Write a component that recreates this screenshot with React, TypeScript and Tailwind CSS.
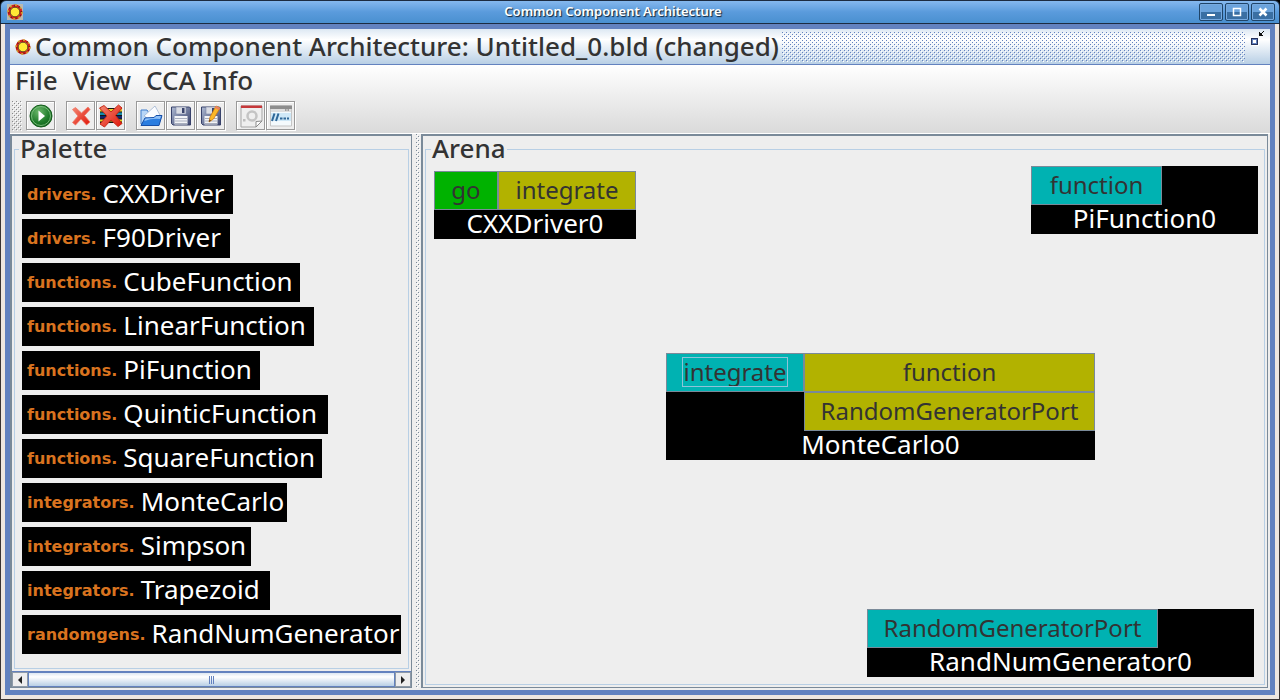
import { useId } from 'react';
import type { ReactNode } from 'react';

type Port = { name: string; kind: 'go' | 'provides' | 'uses'; focused?: boolean };

const portColors = {
  go: 'bg-[#00b200]',
  provides: 'bg-[#00b2b2]',
  uses: 'bg-[#b2b200]',
};

const palette = [
  ['drivers.', 'CXXDriver', 'w-[211px]'],
  ['drivers.', 'F90Driver', 'w-[208px]'],
  ['functions.', 'CubeFunction', 'w-[278px]'],
  ['functions.', 'LinearFunction', 'w-[292px]'],
  ['functions.', 'PiFunction', 'w-[238px]'],
  ['functions.', 'QuinticFunction', 'w-[306px]'],
  ['functions.', 'SquareFunction', 'w-[300px]'],
  ['integrators.', 'MonteCarlo', 'w-[265px]'],
  ['integrators.', 'Simpson', 'w-[229px]'],
  ['integrators.', 'Trapezoid', 'w-[248px]'],
  ['randomgens.', 'RandNumGenerator', 'w-[379px]'],
];

function SunIcon({ boxed = false }: { boxed?: boolean }) {
  return (
    <svg viewBox="0 0 16 16" className="size-4 shrink-0" aria-hidden="true">
      {boxed && <path d="M0 0h16v16H0z" fill="#b9b9b0" />}
      <circle cx="8" cy="8" r="6.2" fill="none" stroke="#d8201c" strokeWidth="2.4" />
      <circle cx="8" cy="8" r="6.9" fill="none" stroke="#c9a62a" strokeWidth="1.6" strokeDasharray="1.8 3.6" />
      <circle cx="8" cy="8" r="6.4" fill="none" stroke="#6b1a10" strokeWidth="1.6" strokeDasharray="1 4.03" strokeDashoffset="2" />
      <circle cx="8" cy="8" r="4.8" fill="#ffe835" stroke="#5a2a10" strokeWidth=".9" />
    </svg>
  );
}

// Diagonal drag texture of the Metal look and feel
function Bumps({ className, dark, light = '#fff' }: { className: string; dark: string; light?: string }) {
  const id = useId();
  return (
    <svg className={className} aria-hidden="true" shapeRendering="crispEdges">
      <defs>
        <pattern id={id} width="4" height="4" patternUnits="userSpaceOnUse">
          <path d="M0 0h1v1H0zM2 2h1v1H2z" fill={dark} />
          <path d="M1 1h1v1H1zM3 3h1v1H3z" fill={light} />
        </pattern>
      </defs>
      <rect width="100%" height="100%" fill={`url(#${id})`} />
    </svg>
  );
}

function WindowButton({ label, children }: { label: string; children: ReactNode }) {
  return (
    <button
      type="button"
      aria-label={label}
      className="flex h-[18px] w-6 items-center justify-center rounded-[2px] border border-[#1f4468] bg-linear-to-b from-[#6ba3dc] from-50% to-[#3a6fa3] to-50% inset-ring inset-ring-[#77aae0]"
    >
      <svg viewBox="0 0 10 10" className="size-[10px]" fill="none" stroke="#fff" strokeWidth="2" aria-hidden="true">
        {children}
      </svg>
    </button>
  );
}

function ToolButton({ label, children }: { label: string; children: ReactNode }) {
  return (
    <button
      type="button"
      aria-label={label}
      className="flex size-[29px] items-center justify-center border border-[#999] bg-[#eee] shadow-[1px_1px_0_#fff] inset-shadow-[1px_1px_0_#fff]"
    >
      <svg viewBox="0 0 24 24" className="size-6" aria-hidden="true">
        {children}
      </svg>
    </button>
  );
}

function Floppy() {
  return (
    <>
      <path d="M2.500 3h18l1 1v17H4l-1.500-1.500z" fill="url(#steel)" stroke="#38426b" strokeWidth="1" />
      <path d="M7 3h10v7H7z" fill="#d9dce4" stroke="#7d86a5" strokeWidth=".6" />
      <path d="M13 4h2.500v5H13z" fill="#39436b" />
      <path d="M5.500 12h13v8.500h-13z" fill="#f3f4f7" />
      <path d="M6 14.500h12M6 17h12M6 19.500h12" stroke="#a9afbe" strokeWidth="1" />
    </>
  );
}

function ToolBar() {
  return (
    <div role="toolbar" aria-label="Main" className="flex h-[35px] items-start gap-[11px] pt-[3px] pl-[2px]">
      <div className="flex gap-1">
        <Bumps className="h-[30px] w-[10px]" dark="#8a8a8a" />
        <ToolButton label="Run">
          <defs>
            <radialGradient id="green" cx=".4" cy=".3" r=".8">
              <stop offset="0" stopColor="#6cb86b" />
              <stop offset=".6" stopColor="#1f7c2a" />
              <stop offset="1" stopColor="#0c5a17" />
            </radialGradient>
            <linearGradient id="steel" x2="1" y2="1">
              <stop offset="0" stopColor="#aebad3" />
              <stop offset="1" stopColor="#39426b" />
            </linearGradient>
            <linearGradient id="red" x2="1" y2="1">
              <stop offset="0" stopColor="#f58a75" />
              <stop offset="1" stopColor="#e01408" />
            </linearGradient>
          </defs>
          <circle cx="12" cy="12" r="11" fill="url(#green)" stroke="#145c1c" strokeWidth="1" />
          <circle cx="12" cy="12" r="9.500" fill="none" stroke="#8cc98b" strokeWidth=".8" />
          <path d="M9.500 6.500 16 12 9.500 17.500z" fill="#fff" />
        </ToolButton>
      </div>
      <div className="flex gap-px">
        <ToolButton label="Remove">
          <path
            d="M3.500 5.500 6.500 3.500 12.500 9 19 3 21 5.500 15.500 11.500 21 18 17.500 21 12 15 6.500 21 3.500 18.500 9 12z"
            fill="url(#red)"
            stroke="#ee7766"
            strokeWidth=".8"
          />
        </ToolButton>
        <ToolButton label="Remove all">
          <path d="M1 4h22v15H1z" fill="#161616" />
          <path d="M1 5h22v2.500H1zM1 15.500h22v2H1z" fill="#e3d126" />
          <path d="M1 8.500h22V11H1z" fill="#188ba8" />
          <path d="M1 12h22v2.500H1z" fill="#14246b" />
          <path
            d="M.5 4 5 1.500 12 8 19.500 1 23 4 16.500 11.500 23 19.500 19 22.500 12 16 5.500 23 1 20 8 12z"
            fill="url(#red)"
            stroke="#c52a18"
            strokeWidth="1"
          />
        </ToolButton>
      </div>
      <div className="flex gap-px">
        <ToolButton label="Open">
          <path d="M2 20V6h6l2 3h9v11z" fill="#b8d6f7" stroke="#3f7ccc" strokeWidth="1" />
          <path d="M5 12 16 2l5 9-8 6z" fill="#fbfcff" stroke="#9fb4d0" strokeWidth=".8" />
          <path d="M2 21.500 6 14l9-.5 2-2h6L20 21.500z" fill="#2b7de0" stroke="#174fa8" strokeWidth="1" />
          <path d="M6.500 14.500 15 14l2.500-2H22l-1 3q-7-1-16 2z" fill="#8fc0f8" />
        </ToolButton>
        <ToolButton label="Save">
          <Floppy />
        </ToolButton>
        <ToolButton label="Save as">
          <Floppy />
          <path d="M10 18 11 13 17 2l4 2-6.500 11z" fill="#fbb829" stroke="#d07a12" strokeWidth=".8" />
          <path d="M17 2l4 2-1 2-4-2z" fill="#e8806a" />
          <path d="M10 18l.5-2.500 1.500 1z" fill="#4a3320" />
        </ToolButton>
      </div>
      <div className="flex gap-px">
        <ToolButton label="Object properties">
          <path d="M2 2h21v15l-6 6H2z" fill="#efefef" stroke="#a5a5a5" strokeWidth="1" />
          <path d="M2 1.500h21V4H2z" fill="#c6383a" />
          <circle cx="13" cy="12" r="4.500" fill="none" stroke="#c4c4c4" strokeWidth="2.500" />
          <path d="M4 15h2.500v2.500H4z" fill="#bdbdbd" />
          <path d="M17 23v-5.500l6-.5z" fill="#fff" stroke="#8b8b8b" strokeWidth="1" />
        </ToolButton>
        <ToolButton label="Console">
          <path d="M1.500 2h21v20h-21z" fill="#f4fafd" stroke="#c5c5c5" strokeWidth="1" />
          <path d="M1 1.500h22V5H1z" fill="#8d8d8d" />
          <path d="M2 5h20v3H2z" fill="#dedede" />
          <path d="M16 6h1.500M18.500 6H20" stroke="#888" strokeWidth="1.500" />
          <path d="M2 9h20v8H2z" fill="#cfe8f7" />
          <path d="M3 17 5.500 9.500M7 17 9.500 9.500M11 14.500h2.500M14.500 14.500H17M18 14.500h2" stroke="#2e6798" strokeWidth="2" />
        </ToolButton>
      </div>
    </div>
  );
}

function ScrollArrow({ label, d }: { label: string; d: string }) {
  return (
    <button type="button" aria-label={label} className="flex w-4 items-center justify-center border border-[#8e9aa8] bg-[#eee]">
      <svg viewBox="0 0 4 8" className="h-2 w-1" aria-hidden="true">
        <path d={d} fill="#222" />
      </svg>
    </button>
  );
}

function PortButton({ name, kind, focused }: Port) {
  return (
    <button
      type="button"
      className={`flex h-[39px] min-w-0 flex-auto items-center justify-center border border-[#7a8a99] pb-px text-2xl leading-7 font-normal ${portColors[kind]}`}
    >
      <span className={focused ? 'outline outline-[#8fc3d8]' : undefined}>{name}</span>
    </button>
  );
}

type NodeProps = {
  name: string;
  place: string;
  left: Port[];
  leftWidth: string;
  right?: Port[];
};

function ComponentNode({ name, place, left, leftWidth, right = [] }: NodeProps) {
  return (
    <article className={`absolute bg-black ${place}`}>
      <div className="flex items-start">
        <div className={`flex shrink-0 flex-col ${leftWidth}`}>
          {left.map((port) => (
            <PortButton key={port.name} {...port} />
          ))}
        </div>
        <div className="flex flex-1 flex-col">
          {right.map((port) => (
            <PortButton key={port.name} {...port} />
          ))}
        </div>
      </div>
      <h3 className="h-[29px] text-center leading-[26px] font-normal text-white">{name}</h3>
    </article>
  );
}

function Palette() {
  return (
    <section className="flex w-[402px] shrink-0 flex-col border-t-2 border-r border-b border-l-2 border-[#7a8a99]">
      <fieldset className="mx-[2px] mb-[2px] min-w-0 flex-1 border border-[#b8cfe5] px-[7px] pb-[14px]">
        <legend className="-ml-[3px] px-px pb-[2px] leading-6">Palette</legend>
        <ul className="flex flex-col items-start gap-[5px] pt-[13px]">
          {palette.map(([group, name, width]) => (
            <li key={name}>
              <button type="button" className={`flex h-[39px] items-center gap-[6px] bg-black pl-[5px] whitespace-nowrap ${width}`}>
                <span className="font-['DejaVu_Sans',sans-serif] text-base font-bold text-[#d9731f]">{group}</span>
                <span className="pb-[2px] font-normal text-white">{name}</span>
              </button>
            </li>
          ))}
        </ul>
      </fieldset>
      <div className="flex h-4 border-t border-[#6382bf]">
        <ScrollArrow label="Scroll left" d="M4 0v8L0 4z" />
        <div className="flex flex-1 items-center justify-center gap-px border border-[#6382bf] bg-linear-to-b from-[#dde8f3] via-white via-30% to-[#b8cfe5]">
          {[0, 1, 2].map((i) => (
            <span key={i} className="h-2 w-px bg-[#6382bf]" />
          ))}
        </div>
        <ScrollArrow label="Scroll right" d="M0 0v8l4-4z" />
      </div>
    </section>
  );
}

function Arena() {
  return (
    <section className="mr-[2px] flex min-w-0 flex-1 flex-col border-t-2 border-r border-b border-l-2 border-[#7a8a99]">
      <fieldset className="mx-[2px] mb-[2px] flex min-w-0 flex-1 flex-col border border-[#b8cfe5]">
        <legend className="ml-[5px] px-px pb-[2px] leading-6">Arena</legend>
        <div className="relative flex-1">
          <ComponentNode
            name="CXXDriver0"
            place="top-[9px] left-2 w-[202px]"
            leftWidth="w-16"
            left={[{ name: 'go', kind: 'go' }]}
            right={[{ name: 'integrate', kind: 'uses' }]}
          />
          <ComponentNode
            name="PiFunction0"
            place="top-1 left-[605px] w-[227px]"
            leftWidth="w-[131px]"
            left={[{ name: 'function', kind: 'provides' }]}
          />
          <ComponentNode
            name="MonteCarlo0"
            place="top-[191px] left-[240px] w-[429px]"
            leftWidth="w-[138px]"
            left={[{ name: 'integrate', kind: 'provides', focused: true }]}
            right={[
              { name: 'function', kind: 'uses' },
              { name: 'RandomGeneratorPort', kind: 'uses' },
            ]}
          />
          <ComponentNode
            name="RandNumGenerator0"
            place="top-[447px] left-[441px] w-[387px]"
            leftWidth="w-[291px]"
            left={[{ name: 'RandomGeneratorPort', kind: 'provides' }]}
          />
        </div>
      </fieldset>
    </section>
  );
}

export default function App() {
  return (
    <div className="flex min-h-screen flex-col bg-black font-['Noto_Sans',sans-serif] text-[26px] font-medium text-[#333]">
      <header className="flex h-6 items-center rounded-t-md border border-[#1c2b40] bg-linear-to-b from-[#85b8ee] via-[#5a9bdc] via-50% to-[#4a90d0] pr-1 pl-[6px]">
        <SunIcon boxed />
        <h1 className="flex-1 pl-1 text-center text-[13px] font-semibold text-white [text-shadow:1px_1px_1px_#123]">
          Common Component Architecture
        </h1>
        <div className="flex gap-[2px]">
          <WindowButton label="Minimize">
            <path d="M1 8h8" />
          </WindowButton>
          <WindowButton label="Maximize">
            <path d="M1.500 1.500h7v7h-7z" strokeWidth="1.500" />
          </WindowButton>
          <WindowButton label="Close">
            <path d="M1.500 1.500l7 7M8.500 1.500l-7 7" strokeWidth="2.500" />
          </WindowButton>
        </div>
      </header>

      <div className="flex flex-1 flex-col border-x border-b border-[#3a3432] bg-[#efe7e0] px-1 pb-1">
        <div className="flex flex-1 flex-col border-5 border-[#6382bf] bg-[#eee]">
          <div className="flex h-9 items-center border-b border-[#6382bf] bg-linear-to-b from-[#dde8f3] via-white via-30% to-[#b8cfe5] pr-[5px] pl-[5px]">
            <SunIcon />
            <h2 className="pb-[2px] pl-1 leading-8 whitespace-nowrap">Common Component Architecture: Untitled_0.bld (changed)</h2>
            <Bumps className="ml-[3px] h-[30px] min-w-0 flex-1" dark="#6382bf" />
            <button type="button" aria-label="Restore" className="ml-[5px] self-start">
              <svg viewBox="0 0 15 17" className="h-[17px] w-[15px]" aria-hidden="true" shapeRendering="crispEdges">
                <path d="M2 10h7v7H2z" fill="#fff" />
                <path d="M1 9h7v7H1z" fill="#26325c" />
                <path d="M2 10h5v5H2z" fill="#6382bf" />
                <path d="M3 11h3v3H3z" fill="#fff" />
                <path
                  d="M9 3h1v4H9zM9 6h4v1H9zM10 5h1v1h-1zM11 4h1v1h-1zM12 3h1v1h-1zM13 2h1v1h-1zM10 4h1v1h-1zM11 5h1v1h-1z"
                  fill="#111"
                />
              </svg>
            </button>
          </div>

          <div className="border-b border-white bg-linear-to-b from-white to-[#dadada]">
            <nav className="flex h-[33px] items-center gap-[15px] pb-[2px] pl-[5px]">
              <button type="button">File</button>
              <button type="button">View</button>
              <button type="button">CCA Info</button>
            </nav>
            <ToolBar />
          </div>

          <main className="flex flex-1 pb-[2px]">
            <Palette />
            <Bumps className="mr-px ml-1 w-1 shrink-0 self-stretch" dark="#7a8a99" />
            <Arena />
          </main>
        </div>
      </div>
    </div>
  );
}
